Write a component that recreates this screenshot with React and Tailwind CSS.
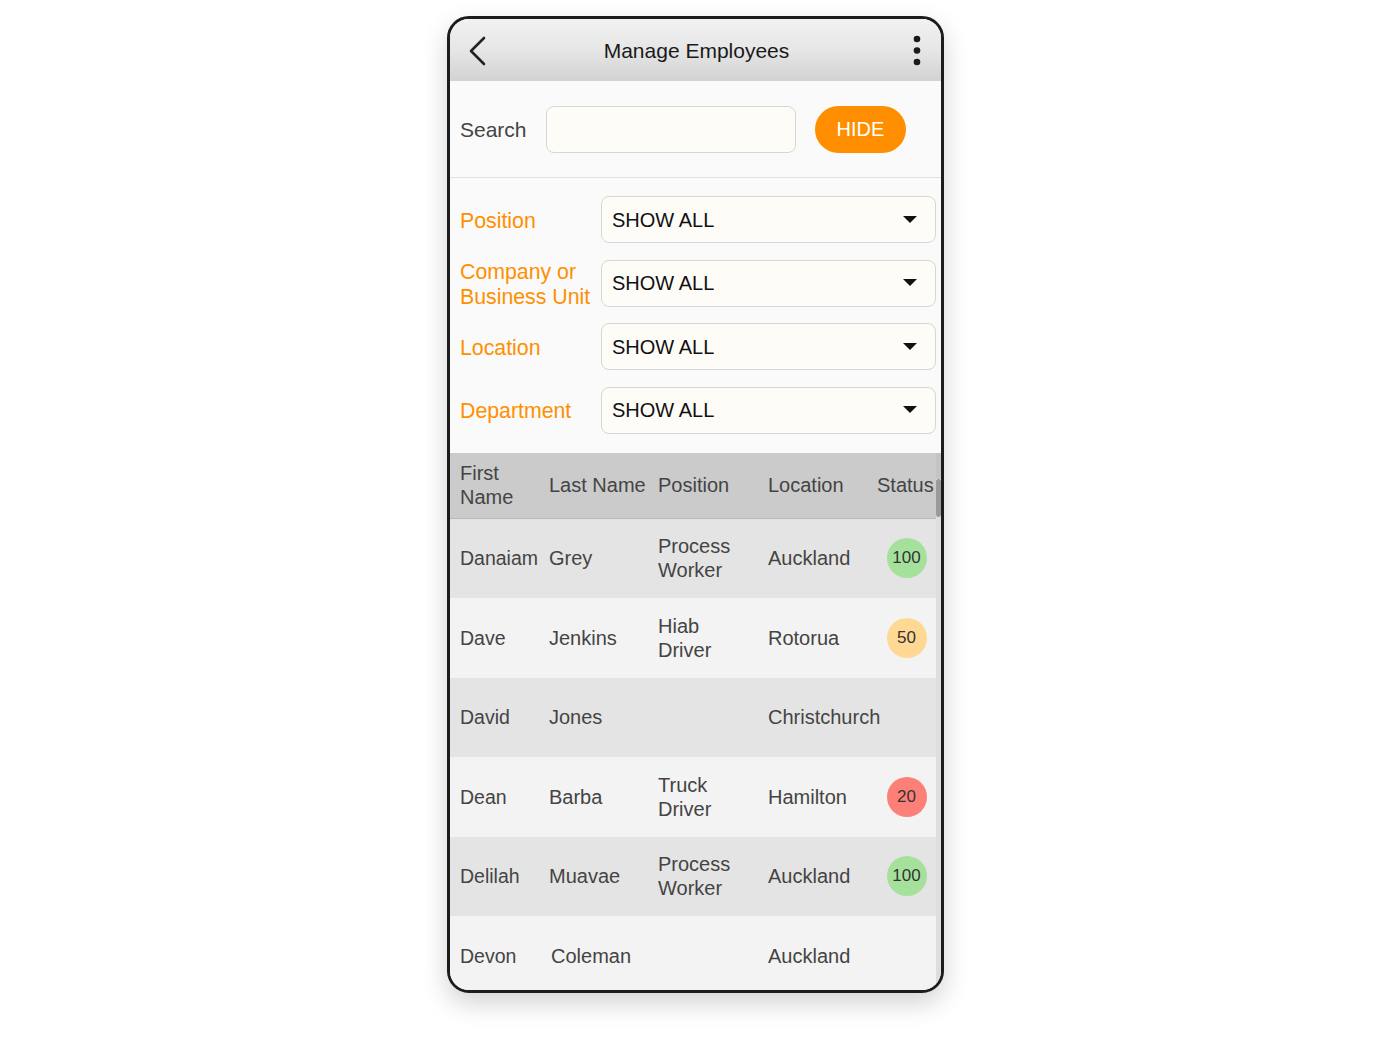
import React from "react";

const rows = [
  { first: "Danaiam", last: "Grey", pos: ["Process", "Worker"], loc: "Auckland", status: 100 },
  { first: "Dave", last: "Jenkins", pos: ["Hiab", "Driver"], loc: "Rotorua", status: 50 },
  { first: "David", last: "Jones", pos: [], loc: "Christchurch", status: null },
  { first: "Dean", last: "Barba", pos: ["Truck", "Driver"], loc: "Hamilton", status: 20 },
  { first: "Delilah", last: "Muavae", pos: ["Process", "Worker"], loc: "Auckland", status: 100 },
  { first: "Devon", last: "Coleman", pos: [], loc: "Auckland", status: null, lastPad: true },
];

function Badge({ value }) {
  if (value == null) return null;
  const color =
    value >= 100 ? "bg-[#a6e19c]" : value >= 50 ? "bg-[#ffd994]" : "bg-[#fd8078]";
  return (
    <div className={`w-10 h-10 rounded-full ${color} flex items-center justify-center text-[17px] text-[#333]`}>
      {value}
    </div>
  );
}

function Caret() {
  return (
    <svg width="14" height="8" viewBox="0 0 14 8">
      <path d="M0 0 L14 0 L7 7 Z" fill="#111" />
    </svg>
  );
}

function Select() {
  return (
    <div className="flex-1 h-[47px] rounded-[8px] border border-[#d6d6d6] bg-[#fdfcf7] flex items-center justify-between pl-[10px] pr-[18px] text-[20px] text-[#111]">
      <span>SHOW ALL</span>
      <Caret />
    </div>
  );
}

export default function App() {
  const filters = [
    ["Position"],
    ["Company or", "Business Unit"],
    ["Location"],
    ["Department"],
  ];
  return (
    <div
      className="w-full min-h-[1046px] bg-white pt-4"
      style={{ fontFamily: '"Liberation Sans", Arial, sans-serif' }}
    >
      <div className="mx-auto w-[497px] h-[977px] rounded-[22px] border-[3px] border-[#1c1c1c] overflow-hidden bg-[#fafafa] shadow-[0_10px_26px_rgba(0,0,0,0.18)] flex flex-col">
        {/* Header */}
        <div className="h-[62px] shrink-0 bg-gradient-to-b from-[#f2f2f2] via-[#e6e6e6] to-[#d2d2d2] flex items-center justify-between pl-[19px] pr-[19px] relative">
          <svg width="20" height="30" viewBox="0 0 20 30" className="mt-[1px]">
            <path d="M15 2 L2 15 L15 28" fill="none" stroke="#222" strokeWidth="2.6" strokeLinecap="round" strokeLinejoin="round" />
          </svg>
          <div className="absolute left-0 right-0 text-center text-[21px] text-[#1a1a1a] pointer-events-none mt-[2px] pl-[2px]">
            Manage Employees
          </div>
          <svg width="10" height="32" viewBox="0 0 10 32" className="mt-[1px]">
            <circle cx="5" cy="4" r="3.3" fill="#1a1a1a" />
            <circle cx="5" cy="15.5" r="3.3" fill="#1a1a1a" />
            <circle cx="5" cy="27" r="3.3" fill="#1a1a1a" />
          </svg>
        </div>

        {/* Search */}
        <div className="shrink-0 h-[97px] border-b border-[#e2e2e2] flex items-center pl-[10px]">
          <div className="w-[86px] text-[21px] text-[#444] mt-[2px]">Search</div>
          <div className="w-[250px] h-[47px] rounded-[8px] border border-[#d6d6d6] bg-[#fdfcf7]" />
          <div className="ml-[19px] w-[91px] h-[47px] rounded-full bg-[#ff8f00] text-white text-[20px] flex items-center justify-center">
            HIDE
          </div>
        </div>

        {/* Filters */}
        <div className="shrink-0 flex flex-col gap-[16.5px] pt-[18px] pb-[19px] pl-[10px] pr-[5px]">
          {filters.map((f, i) => (
            <div key={i} className="flex items-center h-[47px]">
              <div className="w-[141px] text-[21.3px] leading-[25px] text-[#ff8f00] mt-[3px]">
                {f.map((l, j) => (
                  <div key={j}>{l}</div>
                ))}
              </div>
              <Select />
            </div>
          ))}
        </div>

        {/* Table */}
        <div className="flex-1 flex overflow-hidden">
          <div className="flex-1 flex flex-col">
            <div className="h-[66px] shrink-0 bg-[#cbcbcb] border-b border-[#b9b9b9] grid grid-cols-[89px_109px_110px_109px_1fr] items-center text-[20px] leading-6 text-[#444]">
              <div className="pl-[10px]">
                <div>First</div>
                <div>Name</div>
              </div>
              <div className="pl-[10px]">Last Name</div>
              <div className="pl-[10px]">Position</div>
              <div className="pl-[10px]">Location</div>
              <div className="pl-[10px] whitespace-nowrap">Status</div>
            </div>
            {rows.map((r, i) => (
              <div
                key={i}
                className={`h-[79.5px] shrink-0 grid grid-cols-[89px_109px_110px_109px_1fr] items-center text-[20px] leading-6 text-[#444] ${
                  i % 2 === 0 ? "bg-[#e4e4e4]" : "bg-[#f3f3f3]"
                }`}
              >
                <div className="pl-[10px] text-[19.5px]">{r.first}</div>
                <div className={r.lastPad ? "pl-[12px]" : "pl-[10px]"}>{r.last}</div>
                <div className="pl-[10px]">
                  {r.pos.map((p, j) => (
                    <div key={j}>{p}</div>
                  ))}
                </div>
                <div className="pl-[10px]">{r.loc}</div>
                <div className="pl-[10px] flex justify-center">
                  <Badge value={r.status} />
                </div>
              </div>
            ))}
          </div>
          {/* scrollbar */}
          <div className="w-[5px] shrink-0 flex flex-col">
            <div className="h-[26px] bg-[#c4c4c4]" />
            <div className="h-[38px] bg-[#9a9a9a] rounded-[2px]" />
            <div className="flex-1 bg-[#dedede]" />
          </div>
        </div>
      </div>
    </div>
  );
}
